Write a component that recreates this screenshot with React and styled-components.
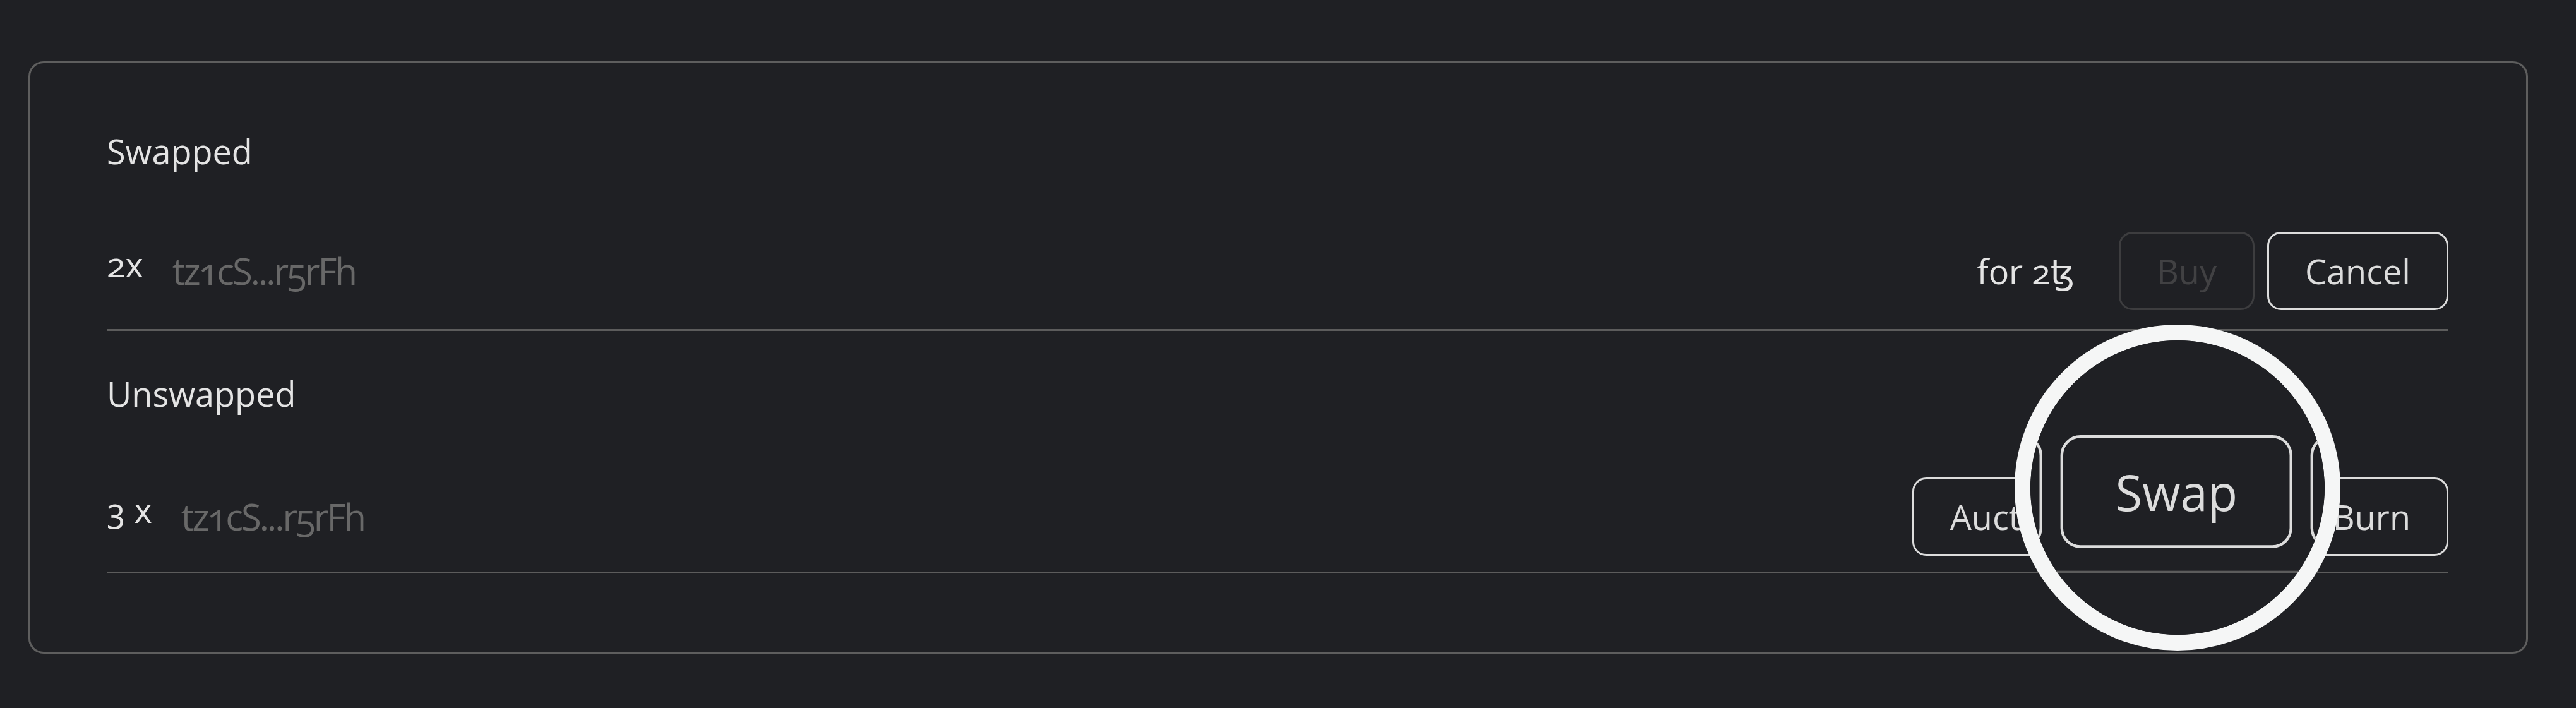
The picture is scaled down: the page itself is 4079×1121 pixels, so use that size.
import React from "react";
import styled, { createGlobalStyle } from "styled-components";

const FONT = `"Open Sans", "DejaVu Sans", sans-serif`;

const GlobalStyle = createGlobalStyle`
  html, body {
    margin: 0;
    padding: 0;
    background: #1f2024;
  }
  * { box-sizing: border-box; }
`;

const Page = styled.div`
  position: relative;
  width: 4079px;
  height: 1121px;
  overflow: hidden;
  background: #1f2024;
  font-family: ${FONT};
  font-variant-numeric: oldstyle-nums;
`;

const Scene = styled.div`
  width: 4079px;
  padding-top: 97px;
`;

const Card = styled.section`
  margin: 0 76px 0 45px;
  border: 3px solid #5e5e5e;
  border-radius: 24px;
  padding: 40px 123px 124px 121px;
  background: #1f2024;
`;

const Section = styled.div`
  padding-top: 67px;
`;

const Title = styled.h3`
  margin: 0;
  font-size: 54px;
  line-height: 64px;
  font-weight: 400;
  color: #e4e4e4;
`;

const Row = styled.div`
  display: flex;
  align-items: center;
  margin-top: ${(p) => p.$top}px;
  padding-bottom: ${(p) => p.$bottom}px;
  border-bottom: 3px solid #5c5c5c;
`;

const Quantity = styled.span`
  font-size: 54px;
  line-height: 64px;
  color: #e4e4e4;
  margin-bottom: 22px;
  white-space: pre;
`;

const Address = styled.span`
  margin-left: 46px;
  font-size: 58px;
  line-height: 70px;
  letter-spacing: -3px;
  color: #686868;
`;

const Spacer = styled.div`
  flex: 1;
`;

const Price = styled.span`
  margin-right: 70px;
  font-size: 54px;
  line-height: 64px;
  color: #e4e4e4;
`;

const Actions = styled.div`
  display: flex;
  gap: 20px;
`;

const Button = styled.button`
  height: 124px;
  padding: 0 57px;
  border: 3px solid ${(p) => (p.disabled ? "#3d3d3f" : "#dcdcdc")};
  border-radius: 22px;
  background: transparent;
  color: ${(p) => (p.disabled ? "#414143" : "#dcdcdc")};
  font-family: ${FONT};
  font-size: 54px;
  line-height: 64px;
  font-weight: 400;
  cursor: ${(p) => (p.disabled ? "default" : "pointer")};
`;

const Lens = styled.div`
  position: absolute;
  left: 3190px;
  top: 514px;
  width: 516px;
  height: 516px;
  border: 25px solid #f5f6f6;
  border-radius: 50%;
  overflow: hidden;
  background: #1f2024;
`;

const LensView = styled.div`
  position: absolute;
  left: -3215px;
  top: -539px;
  width: 4079px;
  transform-origin: 3578px 908px;
  transform: scale(1.44);
  pointer-events: none;
`;

function Content() {
  return (
    <Scene>
      <Card>
        <Section>
          <Title>Swapped</Title>
          <Row $top={96} $bottom={30}>
            <Quantity>2x</Quantity>
            <Address>tz1cS...r5rFh</Address>
            <Spacer />
            <Price>for 2ꜩ</Price>
            <Actions>
              <Button disabled>Buy</Button>
              <Button>Cancel</Button>
            </Actions>
          </Row>
        </Section>
        <Section>
          <Title>Unswapped</Title>
          <Row $top={101} $bottom={25}>
            <Quantity>3 x</Quantity>
            <Address>tz1cS...r5rFh</Address>
            <Spacer />
            <Actions>
              <Button>Auction</Button>
              <Button>Swap</Button>
              <Button>Burn</Button>
            </Actions>
          </Row>
        </Section>
      </Card>
    </Scene>
  );
}

export default function App() {
  return (
    <>
      <GlobalStyle />
      <Page>
        <Content />
        <Lens>
          <LensView aria-hidden="true">
            <Content />
          </LensView>
        </Lens>
      </Page>
    </>
  );
}
